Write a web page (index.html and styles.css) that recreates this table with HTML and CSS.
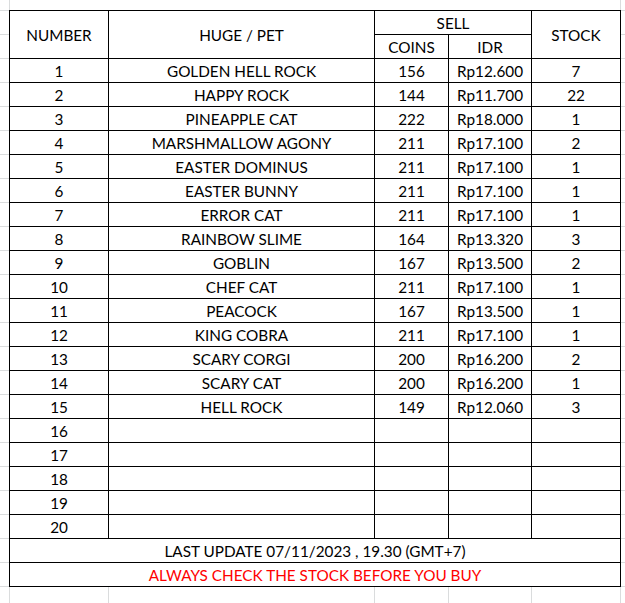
FILE: index.html
```html
<!DOCTYPE html>
<html>
<head>
<meta charset="utf-8">
<link rel="stylesheet" href="styles.css">
</head>
<body>
<div class="sheet">
  <table class="stock">
    <colgroup>
      <col class="c-num"><col class="c-pet"><col class="c-coins"><col class="c-idr"><col class="c-stock">
    </colgroup>
    <thead>
      <tr>
        <th rowspan="2">NUMBER</th>
        <th rowspan="2">HUGE / PET</th>
        <th colspan="2">SELL</th>
        <th rowspan="2">STOCK</th>
      </tr>
      <tr>
        <th>COINS</th>
        <th>IDR</th>
      </tr>
    </thead>
    <tbody>
      <tr><td>1</td><td>GOLDEN HELL ROCK</td><td>156</td><td>Rp12.600</td><td>7</td></tr>
      <tr><td>2</td><td>HAPPY ROCK</td><td>144</td><td>Rp11.700</td><td>22</td></tr>
      <tr><td>3</td><td>PINEAPPLE CAT</td><td>222</td><td>Rp18.000</td><td>1</td></tr>
      <tr><td>4</td><td>MARSHMALLOW AGONY</td><td>211</td><td>Rp17.100</td><td>2</td></tr>
      <tr><td>5</td><td>EASTER DOMINUS</td><td>211</td><td>Rp17.100</td><td>1</td></tr>
      <tr><td>6</td><td>EASTER BUNNY</td><td>211</td><td>Rp17.100</td><td>1</td></tr>
      <tr><td>7</td><td>ERROR CAT</td><td>211</td><td>Rp17.100</td><td>1</td></tr>
      <tr><td>8</td><td>RAINBOW SLIME</td><td>164</td><td>Rp13.320</td><td>3</td></tr>
      <tr><td>9</td><td>GOBLIN</td><td>167</td><td>Rp13.500</td><td>2</td></tr>
      <tr><td>10</td><td>CHEF CAT</td><td>211</td><td>Rp17.100</td><td>1</td></tr>
      <tr><td>11</td><td>PEACOCK</td><td>167</td><td>Rp13.500</td><td>1</td></tr>
      <tr><td>12</td><td>KING COBRA</td><td>211</td><td>Rp17.100</td><td>1</td></tr>
      <tr><td>13</td><td>SCARY CORGI</td><td>200</td><td>Rp16.200</td><td>2</td></tr>
      <tr><td>14</td><td>SCARY CAT</td><td>200</td><td>Rp16.200</td><td>1</td></tr>
      <tr><td>15</td><td>HELL ROCK</td><td>149</td><td>Rp12.060</td><td>3</td></tr>
      <tr><td>16</td><td></td><td></td><td></td><td></td></tr>
      <tr><td>17</td><td></td><td></td><td></td><td></td></tr>
      <tr><td>18</td><td></td><td></td><td></td><td></td></tr>
      <tr><td>19</td><td></td><td></td><td></td><td></td></tr>
      <tr><td>20</td><td></td><td></td><td></td><td></td></tr>
    </tbody>
    <tfoot>
      <tr><td colspan="5">LAST UPDATE 07/11/2023 , 19.30 (GMT+7)</td></tr>
      <tr><td colspan="5" class="warn">ALWAYS CHECK THE STOCK BEFORE YOU BUY</td></tr>
    </tfoot>
  </table>
</div>
</body>
</html>
```

FILE: styles.css
```css
html, body {
  margin: 0;
  padding: 0;
  background: #ffffff;
}

.sheet {
  width: 625px;
  height: 603px;
  box-sizing: border-box;
  padding: 10px 0 0 9px;
  overflow: hidden;
  font-family: Lato, "Noto Sans", sans-serif;
  color: #000000;
  /* faint spreadsheet gridlines around the bordered table */
  background-color: #ffffff;
  background-image:
    linear-gradient(#dadcdd, #dadcdd),
    linear-gradient(#dadcdd, #dadcdd),
    linear-gradient(#dadcdd, #dadcdd),
    linear-gradient(#dadcdd, #dadcdd),
    linear-gradient(#dadcdd, #dadcdd),
    linear-gradient(#dadcdd, #dadcdd),
    repeating-linear-gradient(to bottom, #dadcdd 0 1px, transparent 1px 24px),
    repeating-linear-gradient(to bottom, #dadcdd 0 1px, transparent 1px 24px);
  background-size:
    1px 100%,
    1px 100%,
    1px 20px,
    1px 20px,
    1px 20px,
    1px 20px,
    9px 100%,
    5px 100%;
  background-position:
    9px 0,
    620px 0,
    108px 587px,
    374px 587px,
    448px 587px,
    531px 587px,
    0 10px,
    620px 10px;
  background-repeat: no-repeat;
}

.stock {
  border-collapse: collapse;
  table-layout: fixed;
  width: 611px;
  font-size: 15.3px;
}

.c-num { width: 99px; }
.c-pet { width: 266px; }
.c-coins { width: 74px; }
.c-idr { width: 83px; }
.c-stock { width: 89px; }

.stock th,
.stock td {
  border: 1px solid #000000;
  padding: 0;
  height: 23px;
  line-height: 23px;
  text-align: center;
  font-weight: normal;
  white-space: nowrap;
  overflow: hidden;
}

.stock td {
  padding-top: 1px;
  height: 22px;
  line-height: 22px;
}

.stock thead th {
  padding-top: 2px;
  height: 21px;
  line-height: 21px;
}

.stock .warn {
  color: #ff0000;
}
```
